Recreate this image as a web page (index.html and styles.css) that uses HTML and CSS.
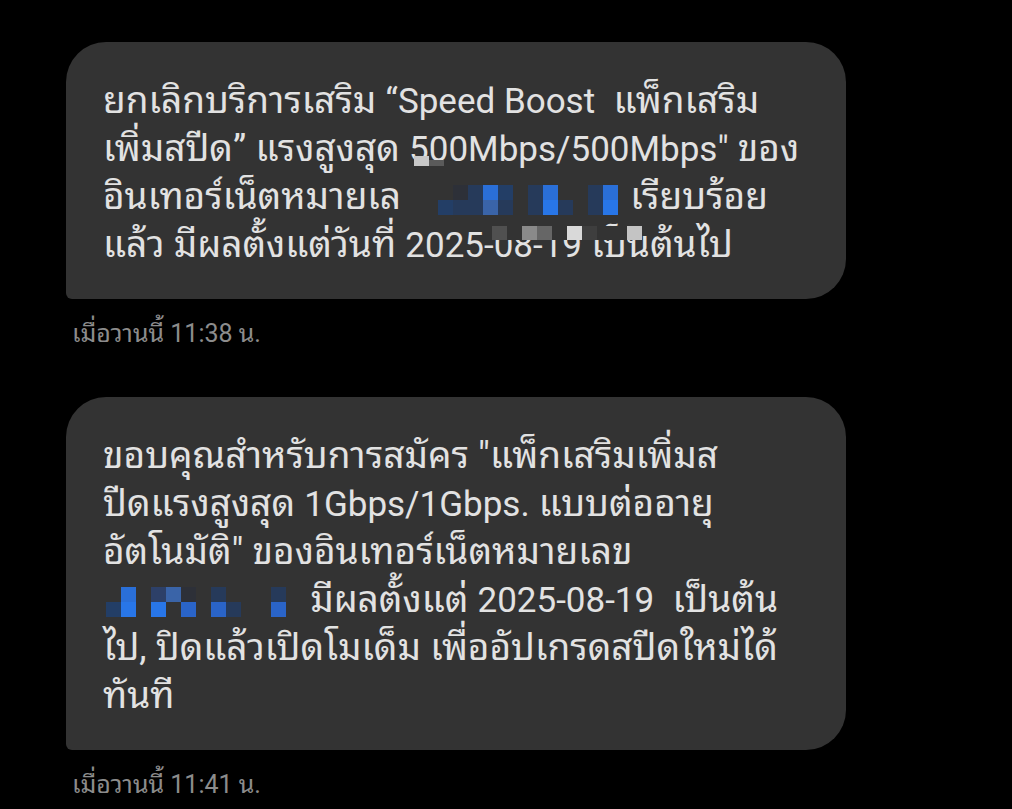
FILE: index.html
```html
<!DOCTYPE html>
<html lang="th">
<head>
    <meta charset="UTF-8">
    <meta name="viewport" content="width=device-width, initial-scale=1.0">
    <title>Messages</title>
    <link rel="stylesheet" href="styles.css">
</head>
<body>
    <main class="thread">
        <div class="message">
            <div class="bubble">
                ยกเลิกบริการเสริม <span class="lat">“Speed Boost</span>&nbsp; แพ็กเสริม<br>
                เพิ่มสปีด” แรงสูงสุด <span class="lat"><span class="smudge">500<span class="patch patch-a"></span><span class="patch patch-b"></span></span>Mbps/500Mbps"</span> ของ<br>
                อินเทอร์เน็ตหมายเล<span class="censor censor-wide"><span class="censor-grid">
                    <i></i><i class="c-dim"></i><i class="c-mid"></i><i class="c-hot"></i><i class="c-deep"></i><i></i><i class="c-mid"></i><i class="c-hot"></i><i></i><i></i><i class="c-mid"></i><i class="c-hot"></i>
                    <i class="c-deep"></i><i class="c-mid"></i><i class="c-mid"></i><i class="c-soft"></i><i class="c-mid"></i><i></i><i class="c-mid"></i><i class="c-bright"></i><i class="c-mid"></i><i></i><i class="c-mid"></i><i class="c-bright"></i>
                </span></span> เรียบร้อย<br>
                แล้ว มีผลตั้งแต่วันที่ <span class="lat">2025-<span class="smudge">08-19<span class="strip">
                    <i class="g-dark"></i><i></i><i class="g-mid"></i><i class="g-dim"></i><i></i><i class="g-light"></i><i class="g-shade"></i><i></i><i></i><i class="g-pale"></i>
                </span></span></span> เป็นต้นไป
            </div>
            <div class="time">เมื่อวานนี้ 11:38 น.</div>
        </div>

        <div class="message">
            <div class="bubble">
                ขอบคุณสำหรับการสมัคร "แพ็กเสริมเพิ่มส<br>
                ปีดแรงสูงสุด <span class="lat">1Gbps/1Gbps.</span> แบบต่ออายุ<br>
                อัตโนมัติ" ของอินเทอร์เน็ตหมายเลข<br>
                <span class="censor censor-short"><span class="censor-grid">
                    <i></i><i class="c-hot"></i><i></i><i class="c-dim2"></i><i class="c-soft"></i><i class="c-dim"></i><i></i><i class="c-mid"></i><i></i><i></i><i></i><i class="c-mid"></i><i></i>
                    <i class="c-deep"></i><i class="c-bright"></i><i></i><i class="c-bright"></i><i></i><i class="c-blue"></i><i></i><i class="c-blue"></i><i class="c-mid"></i><i></i><i></i><i class="c-blue"></i><i></i>
                </span></span> มีผลตั้งแต่ <span class="lat">2025-08-19</span>&nbsp; เป็นต้น<br>
                ไป, ปิดแล้วเปิดโมเด็ม เพื่ออัปเกรดสปีดใหม่ได้<br>
                ทันที
            </div>
            <div class="time">เมื่อวานนี้ 11:41 น.</div>
        </div>
    </main>
</body>
</html>
```

FILE: styles.css
```css
body {
    margin: 0;
    background: #000000;
    font-family: 'Roboto', 'Noto Sans Thai Looped', 'Loma', 'Garuda', 'Noto Sans Thai', 'Noto Sans', sans-serif;
    color: #e2e2e2;
}

.thread {
    display: flex;
    flex-direction: column;
    gap: 48px;
    padding: 42px 0 0 66px;
}

.bubble {
    box-sizing: border-box;
    width: 780px;
    background: #333333;
    border-radius: 40px 40px 40px 6px;
    padding: 35px 30px 30px 37px;
    font-size: 37px;
    line-height: 48px;
    white-space: nowrap;
}

.lat {
    font-size: 35px;
    line-height: 1;
}

.time {
    margin-top: 20px;
    padding-left: 6px;
    font-size: 25px;
    line-height: 30px;
    color: #8c8c8c;
}

/* pixelated number blocks */
.censor {
    display: inline-block;
    position: relative;
    height: 0;
}

.censor-wide {
    width: 220px;
}

.censor-short {
    width: 198px;
}

.censor-grid {
    position: absolute;
    bottom: -6px;
    display: grid;
    grid-template-columns: repeat(12, 15px);
    grid-auto-rows: 15px;
}

.censor-wide .censor-grid {
    left: 37px;
}

.censor-short .censor-grid {
    left: 3px;
    bottom: -5px;
    grid-template-columns: repeat(13, 15px);
}

.censor-grid i, .strip i {
    display: block;
}

.c-dim { background: #2d3038; }
.c-dim2 { background: #2d4068; }
.c-mid { background: #263a5a; }
.c-deep { background: #233e66; }
.c-soft { background: #3a64a8; }
.c-hot { background: #2a6fd8; }
.c-bright { background: #2876e8; }
.c-blue { background: #2a64c8; }

.smudge {
    position: relative;
}

.patch {
    position: absolute;
    top: 27px;
    width: 15px;
}

.patch-a {
    left: 5px;
    height: 10px;
    background: #c8c8c8;
}

.patch-b {
    left: 20px;
    top: 31px;
    height: 6px;
    background: #5a5a5a;
}

.strip {
    position: absolute;
    left: -2px;
    top: 1px;
    display: grid;
    grid-template-columns: repeat(10, 15px);
    grid-auto-rows: 14px;
    background: #333333;
}

.g-dark { background: #505050; }
.g-mid { background: #8a8a8a; }
.g-dim { background: #666666; }
.g-light { background: #d9d9d9; }
.g-shade { background: #3e3e3e; }
.g-pale { background: #c4c4c4; }
```
